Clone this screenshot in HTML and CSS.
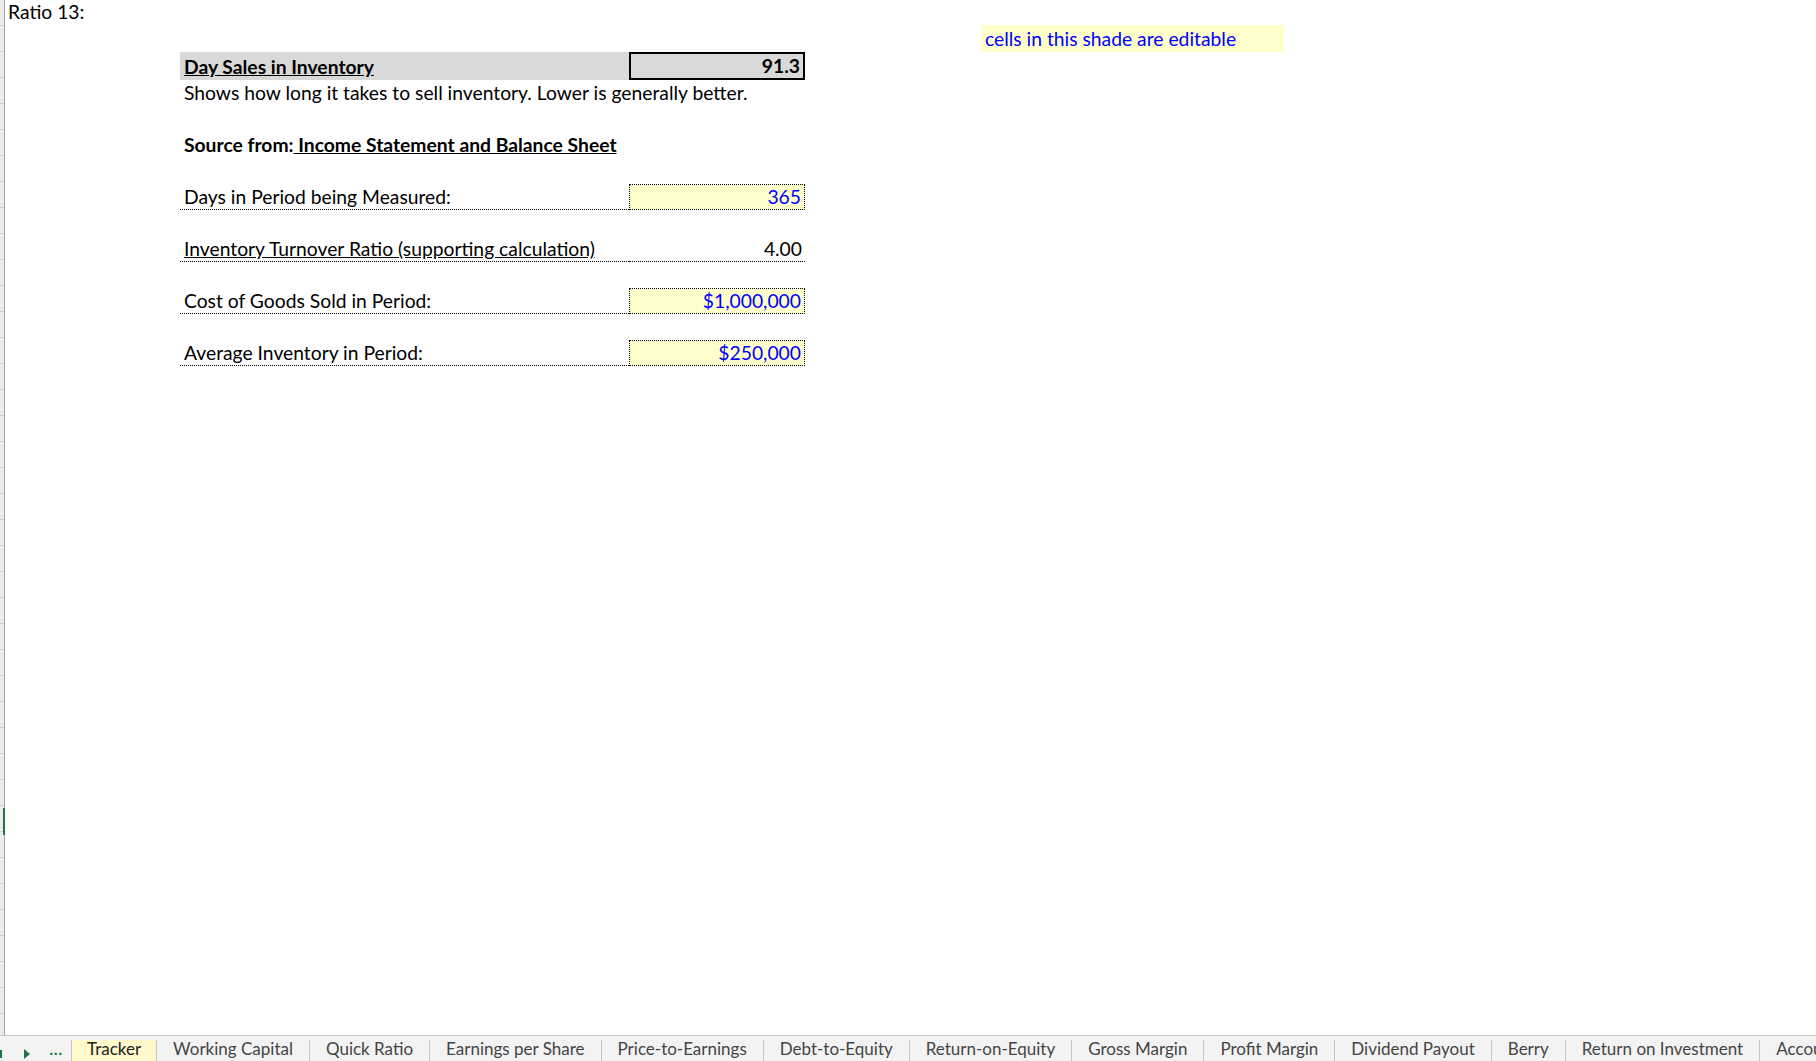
FILE: index.html
```html
<!DOCTYPE html>
<html lang="en">
<head>
  <meta charset="UTF-8" />
  <title>Ratio 13 - Day Sales in Inventory</title>
  <link rel="stylesheet" href="styles.css">
</head>
<body>
  <div class="window">

    <!-- worksheet area -->
    <div class="sheet">
      <div class="row-heads"><span class="active-row"></span></div>

      <div class="cells">
        <div class="row first">
          <div class="cell col-a"><span>Ratio 13:</span></div>
        </div>

        <div class="row second">
          <div class="cell col-e note"><span>cells in this shade are editable</span></div>
        </div>

        <!-- ratio header -->
        <div class="row tall">
          <div class="cell col-b heading"><span><u>Day Sales in Inventory</u></span></div>
          <div class="cell col-c result"><span>91.3</span></div>
        </div>

        <div class="row">
          <div class="cell col-b"><span>Shows how long it takes to sell inventory. Lower is generally better.</span></div>
        </div>

        <div class="row"></div>

        <div class="row">
          <div class="cell col-b bold"><span>Source from:<u> Income Statement and Balance Sheet</u></span></div>
        </div>

        <div class="row"></div>

        <!-- inputs -->
        <div class="row">
          <div class="cell col-b label"><span>Days in Period being Measured:</span></div>
          <div class="cell col-c input"><span>365</span></div>
        </div>

        <div class="row"></div>

        <div class="row">
          <div class="cell col-b label"><span><u>Inventory Turnover Ratio (supporting calculation)</u></span></div>
          <div class="cell col-c calc"><span>4.00</span></div>
        </div>

        <div class="row"></div>

        <div class="row">
          <div class="cell col-b label"><span>Cost of Goods Sold in Period:</span></div>
          <div class="cell col-c input"><span>$1,000,000</span></div>
        </div>

        <div class="row"></div>

        <div class="row">
          <div class="cell col-b label"><span>Average Inventory in Period:</span></div>
          <div class="cell col-c input"><span>$250,000</span></div>
        </div>
      </div>
    </div>

    <!-- sheet tabs -->
    <div class="tabbar">
      <div class="tab-nav">
        <span class="nav-stub"></span>
        <svg class="nav-arrow" width="6" height="10" viewBox="0 0 6 10"><path d="M0 0 L6 5 L0 10 Z" fill="#217346"/></svg>
        <span class="nav-more">...</span>
      </div>
      <div class="tab active">Tracker</div>
      <div class="tab">Working Capital</div>
      <div class="tab">Quick Ratio</div>
      <div class="tab">Earnings per Share</div>
      <div class="tab">Price-to-Earnings</div>
      <div class="tab">Debt-to-Equity</div>
      <div class="tab">Return-on-Equity</div>
      <div class="tab">Gross Margin</div>
      <div class="tab">Profit Margin</div>
      <div class="tab">Dividend Payout</div>
      <div class="tab">Berry</div>
      <div class="tab">Return on Investment</div>
      <div class="tab">Accou</div>
    </div>

  </div>
</body>
</html>
```

FILE: styles.css
```css
body {
  margin: 0;
  background: #fff;
  font-family: Lato, 'Liberation Sans', sans-serif;
  color: #000;
}

.window {
  width: 100vw;
  height: 100vh;
  display: flex;
  flex-direction: column;
  overflow: hidden;
}

/* ---- worksheet ---- */

.sheet {
  flex: 1;
  display: flex;
  min-height: 0;
}

.row-heads {
  position: relative;
  width: 4px;
  border-right: 1px solid #a3a3a3;
  background: repeating-linear-gradient(to bottom, #ececec 0 25px, #cfcfcf 25px 26px);
}

.active-row {
  position: absolute;
  top: 808px;
  right: -1px;
  width: 2px;
  height: 27px;
  background: #217346;
}

.cells {
  flex: 1;
}

.row {
  display: grid;
  grid-template-columns: 175px 449px 176px 176px 303px;
  height: 26px;
}

.row.first { height: 25px; }
.row.second { height: 27px; }
.row.tall { height: 28px; }

.cell {
  display: flex;
  align-items: flex-end;
  box-sizing: border-box;
  padding: 0 3px 2px 4px;
  font-size: 19.3px;
  line-height: 1.2;
  white-space: nowrap;
}

.col-a { grid-column: 1; padding-left: 3px; }
.col-b { grid-column: 2; }
.col-c { grid-column: 3; justify-content: flex-end; }
.col-e { grid-column: 5; }

.bold { font-weight: bold; }

.heading {
  background: #d9d9d9;
  font-weight: bold;
}

.result {
  background: #d9d9d9;
  border: 2px solid #000;
  font-weight: bold;
  padding-bottom: 1px;
}

.note {
  background: #ffffcc;
  color: #0000ff;
  height: 27px;
}

.label {
  border-bottom: 1px dotted #000;
  padding-bottom: 1px;
}

.input {
  background: #ffffcc;
  color: #0000ff;
  border: 1px dotted #000;
  padding-bottom: 1px;
}

.calc {
  border-bottom: 1px dotted #000;
  padding-bottom: 1px;
}

/* ---- sheet tabs ---- */

.tabbar {
  height: 26px;
  box-sizing: border-box;
  border-top: 1px solid #c6c6c6;
  background: #f3f3f3;
  display: flex;
  font-size: 17px;
  color: #444;
  white-space: nowrap;
}

.tab-nav {
  width: 71px;
  flex-shrink: 0;
  position: relative;
  border-right: 1px solid #c6c6c6;
  margin-top: 4px;
  color: #217346;
}

.nav-stub {
  position: absolute;
  left: 0;
  top: 10px;
  width: 2px;
  height: 8px;
  background: #217346;
}

.nav-arrow {
  position: absolute;
  left: 24px;
  top: 9px;
}

.nav-more {
  position: absolute;
  left: 49px;
  top: -1px;
  font-size: 19px;
  line-height: 18px;
}

.tab {
  flex-shrink: 0;
  margin-top: 4px;
  padding: 0 16px;
  line-height: 18px;
  border-right: 1px solid #c6c6c6;
}

.tab.active {
  background: #fff9cc;
  color: #222;
  padding: 0 15px;
}
```
